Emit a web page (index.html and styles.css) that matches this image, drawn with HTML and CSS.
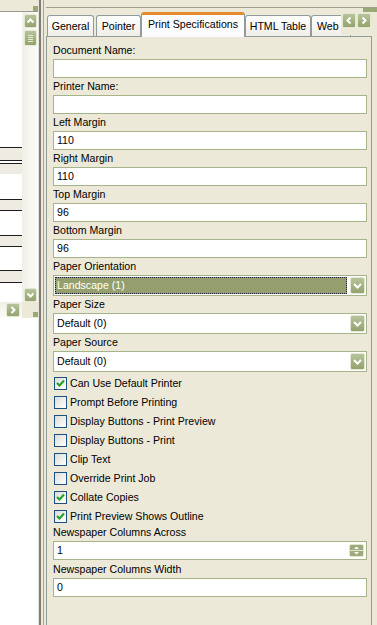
FILE: index.html
```html
<!DOCTYPE html>
<html>

<head>
    <title>Print Specifications</title>
    <link rel="stylesheet" href="styles.css">
</head>

<body>
    <div class="window">
        <div class="left">
            <div class="left-top"><span class="grip"></span></div>
            <div class="grid-area">
                <div class="grid">
                    <div class="band r1"></div>
                    <div class="band open r2"></div>
                    <div class="band r3"></div>
                    <div class="band r4"></div>
                    <div class="band r5"></div>
                </div>
                <div class="vscroll">
                    <div class="sbtn">
                        <svg width="11" height="12" viewBox="0 0 11 12"><path d="M2.5 7.5 L5.5 4.5 L8.5 7.5" fill="none" stroke="#fff" stroke-width="2"/></svg>
                    </div>
                    <div class="sbtn thumb">
                        <svg width="11" height="14" viewBox="0 0 11 14"><path d="M3 4.5 H8 M3 6.5 H8 M3 8.5 H8 M3 10.5 H8" stroke="#e4ead6" stroke-width="1"/></svg>
                    </div>
                    <div class="vtrack"></div>
                    <div class="sbtn">
                        <svg width="11" height="12" viewBox="0 0 11 12"><path d="M2.5 4.5 L5.5 7.5 L8.5 4.5" fill="none" stroke="#fff" stroke-width="2"/></svg>
                    </div>
                </div>
            </div>
            <div class="hbar">
                <div class="hscroll">
                    <div class="sbtn wide">
                        <svg width="12" height="12" viewBox="0 0 12 12"><path d="M4.5 3 L7.5 6 L4.5 9" fill="none" stroke="#fff" stroke-width="2"/></svg>
                    </div>
                </div>
                <div class="corner"><span class="grip"></span></div>
            </div>
            <div class="left-rest"></div>
        </div>

        <div class="splitter"></div>

        <div class="right">
            <div class="right-top">
                <div class="rt-line"></div>
                <div class="rt-row"><span class="rt-block"></span></div>
            </div>
            <div class="tabwrap">
                <div class="tabs">
                    <div class="tab t-general">General</div>
                    <div class="tab t-pointer">Pointer</div>
                    <div class="tab active t-print">Print Specifications</div>
                    <div class="tab t-html">HTML Table</div>
                    <div class="tab t-web">Web</div>
                    <div class="tab-arrows">
                        <div class="sbtn arrow">
                            <svg width="12" height="13" viewBox="0 0 12 13"><path d="M7.5 3.5 L4.5 6.5 L7.5 9.5" fill="none" stroke="#fff" stroke-width="2"/></svg>
                        </div>
                        <div class="sbtn arrow">
                            <svg width="12" height="13" viewBox="0 0 12 13"><path d="M4.5 3.5 L7.5 6.5 L4.5 9.5" fill="none" stroke="#fff" stroke-width="2"/></svg>
                        </div>
                    </div>
                </div>

                <div class="panel">
                    <div class="label">Document Name:</div>
                    <div class="field"></div>
                    <div class="label">Printer Name:</div>
                    <div class="field"></div>
                    <div class="label">Left Margin</div>
                    <div class="field">110</div>
                    <div class="label">Right Margin</div>
                    <div class="field">110</div>
                    <div class="label">Top Margin</div>
                    <div class="field">96</div>
                    <div class="label">Bottom Margin</div>
                    <div class="field">96</div>

                    <div class="label">Paper Orientation</div>
                    <div class="select focus">
                        <span class="val">Landscape (1)</span>
                        <span class="dd"><svg width="13" height="15" viewBox="0 0 13 15"><path d="M3 6 L6.5 9.5 L10 6" fill="none" stroke="#fff" stroke-width="2"/></svg></span>
                    </div>
                    <div class="label">Paper Size</div>
                    <div class="select">
                        <span class="val">Default (0)</span>
                        <span class="dd"><svg width="13" height="15" viewBox="0 0 13 15"><path d="M3 6 L6.5 9.5 L10 6" fill="none" stroke="#fff" stroke-width="2"/></svg></span>
                    </div>
                    <div class="label">Paper Source</div>
                    <div class="select">
                        <span class="val">Default (0)</span>
                        <span class="dd"><svg width="13" height="15" viewBox="0 0 13 15"><path d="M3 6 L6.5 9.5 L10 6" fill="none" stroke="#fff" stroke-width="2"/></svg></span>
                    </div>

                    <div class="check-row">
                        <span class="cb"><svg width="11" height="11" viewBox="0 0 11 11"><path d="M2 5 L4.5 7.5 L9 2.5" fill="none" stroke="#21a121" stroke-width="2"/></svg></span>
                        Can Use Default Printer
                    </div>
                    <div class="check-row"><span class="cb"></span> Prompt Before Printing</div>
                    <div class="check-row"><span class="cb"></span> Display Buttons - Print Preview</div>
                    <div class="check-row"><span class="cb"></span> Display Buttons - Print</div>
                    <div class="check-row"><span class="cb"></span> Clip Text</div>
                    <div class="check-row"><span class="cb"></span> Override Print Job</div>
                    <div class="check-row">
                        <span class="cb"><svg width="11" height="11" viewBox="0 0 11 11"><path d="M2 5 L4.5 7.5 L9 2.5" fill="none" stroke="#21a121" stroke-width="2"/></svg></span>
                        Collate Copies
                    </div>
                    <div class="check-row">
                        <span class="cb"><svg width="11" height="11" viewBox="0 0 11 11"><path d="M2 5 L4.5 7.5 L9 2.5" fill="none" stroke="#21a121" stroke-width="2"/></svg></span>
                        Print Preview Shows Outline
                    </div>

                    <div class="label">Newspaper Columns Across</div>
                    <div class="field spin">
                        <span>1</span>
                        <span class="spinner">
                            <svg width="15" height="13" viewBox="0 0 15 13">
                                <rect x="0.5" y="0.5" width="14" height="12" rx="1.5" fill="#9dab7a" stroke="#dfe6cf"/>
                                <path d="M1 6.5 H14" stroke="#dfe6cf" stroke-width="1"/>
                                <path d="M5 5 L7.5 2.5 L10 5 Z" fill="#fff"/>
                                <path d="M5 8 L7.5 10.5 L10 8 Z" fill="#fff"/>
                            </svg>
                        </span>
                    </div>
                    <div class="label tall">Newspaper Columns Width</div>
                    <div class="field">0</div>
                </div>
            </div>
        </div>
    </div>
</body>

</html>
```

FILE: styles.css
```css
* {
    box-sizing: border-box;
}

body {
    margin: 0;
    font-family: "Liberation Sans", Arial, sans-serif;
    font-size: 10.6px;
    color: #000;
    background-color: #ece9d8;
}

.window {
    display: flex;
    width: 377px;
    height: 625px;
    overflow: hidden;
}

/* left grid pane */
.left {
    width: 38px;
    display: flex;
    flex-direction: column;
    background-color: #fff;
}

.left-top {
    height: 12px;
    background-color: #ece9d8;
    border-bottom: 1px solid #9c9a8e;
    display: flex;
    justify-content: flex-end;
    align-items: flex-end;
}

.left-top .grip {
    width: 5px;
    height: 5px;
    background-color: #9aa878;
}

.grid-area {
    height: 290px;
    display: flex;
}

.grid {
    width: 22px;
    display: flex;
    flex-direction: column;
}

.band {
    border-top: 1px solid #1e1e1e;
    border-bottom: 1px solid #1e1e1e;
    background-color: #eeece2;
}

.band.open {
    border-bottom: none;
}

.r1 { margin-top: 135px; height: 14px; }
.r2 { margin-top: 2px; height: 11px; }
.r3 { margin-top: 25px; height: 12px; }
.r4 { margin-top: 24px; height: 12px; }
.r5 { margin-top: 23px; height: 13px; }

.vscroll {
    width: 16px;
    display: flex;
    flex-direction: column;
    padding: 2px 0 0 2px;
    background: linear-gradient(to right, #f1efe6, #fcfcf8);
}

.vtrack {
    flex: 1;
}

.sbtn {
    width: 13px;
    height: 14px;
    border: 1px solid #e2e8d4;
    border-radius: 2px;
    background: linear-gradient(#b7c49b, #93a26d);
    display: flex;
    align-items: center;
    justify-content: center;
}

.sbtn.thumb {
    margin-top: 2px;
    height: 16px;
}

.sbtn.wide {
    width: 14px;
}

.hbar {
    height: 16px;
    display: flex;
}

.hscroll {
    width: 22px;
    padding: 1px 0 0 6px;
    background: linear-gradient(#f1efe6, #fcfcf8);
}

.corner {
    width: 16px;
    background-color: #ece9d8;
    display: flex;
    justify-content: flex-end;
    align-items: flex-end;
}

.corner .grip {
    width: 5px;
    height: 5px;
    margin-bottom: 1px;
    background-color: #9aa878;
}

.left-rest {
    flex: 1;
    background-color: #fff;
}

.splitter {
    width: 8px;
    background: linear-gradient(to right,
        #e6e3d6 0 1px,
        #7d7d7d 1px 3px,
        #ece9d8 3px 5px,
        #a7a597 5px 6px,
        #ece9d8 6px);
}

/* right property pane */
.right {
    flex: 1;
    display: flex;
    flex-direction: column;
}

.right-top {
    height: 12px;
}

.rt-line {
    height: 8px;
    border-bottom: 1px solid #a09e92;
}

.rt-row {
    height: 4px;
    display: flex;
    justify-content: flex-end;
}

.rt-block {
    width: 14px;
    background-color: #9aa878;
}

.tabwrap {
    flex: 1;
    display: flex;
    flex-direction: column;
    margin-right: 5px;
}

.tabs {
    height: 24px;
    display: flex;
    align-items: flex-end;
    padding-left: 1px;
    position: relative;
}

.tab {
    height: 21px;
    border: 1px solid #919b9c;
    border-bottom: none;
    border-radius: 3px 3px 0 0;
    background: linear-gradient(#ffffff, #efeee7);
    text-align: center;
    line-height: 20px;
    white-space: nowrap;
    overflow: hidden;
    flex-shrink: 0;
}

.tab.active {
    height: 25px;
    margin-bottom: -1px;
    border-top: 3px solid #e68b2c;
    background: #fcfcfe;
    line-height: 19px;
    position: relative;
    z-index: 1;
}

.t-general { width: 47px; margin-right: 2px; }
.t-pointer { width: 45px; }
.t-print { width: 104px; }
.t-html { width: 66px; }
.t-web { width: 40px; text-align: left; padding-left: 5px; }

.tab-arrows {
    position: absolute;
    right: 0;
    top: 0;
    width: 31px;
    height: 23px;
    padding: 1px 0 0 1px;
    display: flex;
    gap: 1px;
    background-color: #ece9d8;
    z-index: 2;
}

.sbtn.arrow {
    width: 14px;
    height: 15px;
}

.panel {
    flex: 1;
    border: 1px solid #919b9c;
    border-bottom: none;
    padding: 5px 4px 0 6px;
    background-color: #ece9d8;
}

.label {
    height: 17px;
    line-height: 17px;
    white-space: nowrap;
}

.label.tall {
    height: 18px;
    line-height: 18px;
}

.field {
    height: 19px;
    border: 1px solid #a5b48b;
    background-color: #fff;
    padding-left: 3px;
    line-height: 17px;
}

.field.spin {
    display: flex;
    align-items: center;
    padding-right: 2px;
}

.spinner {
    margin-left: auto;
    width: 15px;
    height: 13px;
    display: flex;
}

.select {
    height: 21px;
    border: 1px solid #a5b48b;
    background-color: #fff;
    padding: 1px;
    display: flex;
    gap: 3px;
}

.select .val {
    flex: 1;
    height: 17px;
    border: 1px solid transparent;
    line-height: 15px;
    padding-left: 1px;
}

.select.focus .val {
    background-color: #959f6e;
    color: #fff;
    border: 1px dotted #1d1d3a;
}

.dd {
    width: 15px;
    height: 17px;
    border: 1px solid #e2e8d4;
    border-radius: 2px;
    background: linear-gradient(#b7c49b, #93a26d);
    display: flex;
    align-items: center;
    justify-content: center;
}

.check-row {
    height: 19px;
    padding: 3px 0 0 1px;
    display: flex;
    align-items: center;
    gap: 3px;
    white-space: nowrap;
}

.cb {
    width: 13px;
    height: 13px;
    border: 1px solid #1c5180;
    background: linear-gradient(135deg, #dcdcd6, #ffffff);
    display: flex;
    flex-shrink: 0;
}
```
